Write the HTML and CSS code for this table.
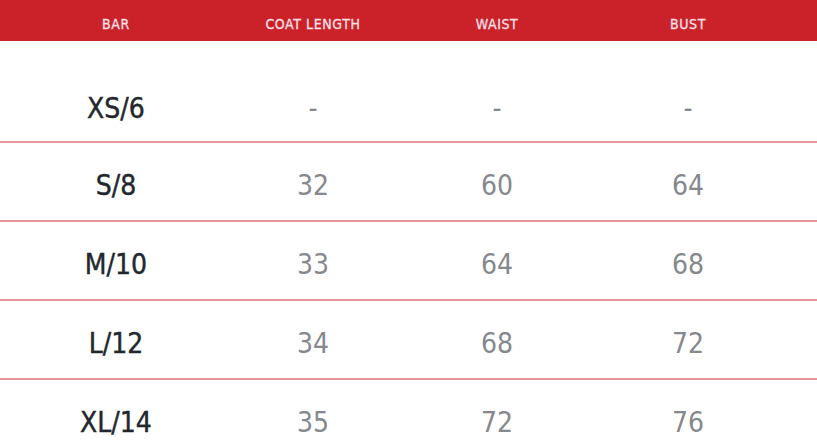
FILE: index.html
```html
<!DOCTYPE html>
<html>
<head>
<meta charset="utf-8">
<link rel="stylesheet" href="styles.css">
</head>
<body>
<div class="chart">
  <div class="row head">
    <div class="cell">BAR</div>
    <div class="cell">COAT LENGTH</div>
    <div class="cell">WAIST</div>
    <div class="cell">BUST</div>
  </div>
  <div class="body">
    <div class="row item">
      <div class="cell size">XS/6</div>
      <div class="cell val">-</div>
      <div class="cell val">-</div>
      <div class="cell val">-</div>
    </div>
    <div class="row item">
      <div class="cell size">S/8</div>
      <div class="cell val">32</div>
      <div class="cell val">60</div>
      <div class="cell val">64</div>
    </div>
    <div class="row item">
      <div class="cell size">M/10</div>
      <div class="cell val">33</div>
      <div class="cell val">64</div>
      <div class="cell val">68</div>
    </div>
    <div class="row item">
      <div class="cell size">L/12</div>
      <div class="cell val">34</div>
      <div class="cell val">68</div>
      <div class="cell val">72</div>
    </div>
    <div class="row item last">
      <div class="cell size">XL/14</div>
      <div class="cell val">35</div>
      <div class="cell val">72</div>
      <div class="cell val">76</div>
    </div>
  </div>
</div>
</body>
</html>
```
FILE: styles.css
```css
html, body {
  margin: 0;
  padding: 0;
  background: #ffffff;
}
body {
  font-family: "DejaVu Sans Condensed", "DejaVu Sans", sans-serif;
  width: 817px;
  height: 448px;
  overflow: hidden;
}
.row {
  display: grid;
  grid-template-columns: 232px 162px 206px 176px 41px;
  align-items: center;
}
.cell {
  text-align: center;
}
.head {
  background: #cb2229;
  height: 41px;
  color: #f6dfe1;
  font-size: 14px;
  letter-spacing: 0.6px;
  -webkit-text-stroke: 0.35px #f6dfe1;
}
.head .cell {
  padding-top: 6px;
}
.body {
  padding-top: 26px;
}
.item {
  height: 77px;
  border-bottom: 2px solid #e6959b;
  font-size: 28px;
}
.item:first-child {
  height: 74px;
}
.item .cell {
  padding-top: 8px;
}
.item.last {
  border-bottom: none;
}
.size {
  color: #22272d;
  -webkit-text-stroke: 0.4px #22272d;
}
.val {
  color: #85888c;
  font-weight: 300;
}
```
